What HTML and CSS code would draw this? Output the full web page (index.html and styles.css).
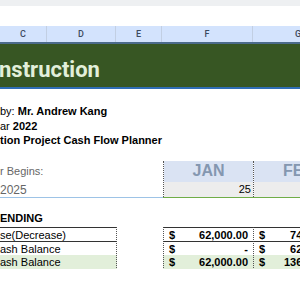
FILE: index.html
```html
<!DOCTYPE html>
<html>
<head>
<meta charset="utf-8">
<link rel="stylesheet" href="styles.css">
</head>
<body>
<div class="sheet">
  <div class="toolbar"></div>
  <div class="gap"></div>
  <div class="colhdr">
    <div class="ch">C</div>
    <div class="ch">D</div>
    <div class="ch">E</div>
    <div class="ch">F</div>
    <div class="ch">G</div>
  </div>
  <div class="banner"><span class="title">nstruction</span></div>
  <div class="info">
    <div class="line">by: <b>Mr. Andrew Kang</b></div>
    <div class="line">ar <b>2022</b></div>
    <div class="line"><b>tion Project Cash Flow Planner</b></div>
  </div>
  <div class="months">
    <div class="mleft">
      <div class="begins">r Begins:</div>
      <div class="year">2025</div>
    </div>
    <div class="mcol">
      <div class="mname">JAN</div>
      <div class="mval">25</div>
    </div>
    <div class="mcol">
      <div class="mname">FEB</div>
      <div class="mval"></div>
    </div>
  </div>
  <div class="ending">ENDING</div>
  <div class="table">
    <div class="row">
      <div class="lbl">se(Decrease)</div>
      <div class="gapc"></div>
      <div class="amt"><span>$</span><span>62,000.00</span></div>
      <div class="amt"><span>$</span><span>74,000.00</span></div>
    </div>
    <div class="row">
      <div class="lbl">ash Balance</div>
      <div class="gapc"></div>
      <div class="amt"><span>$</span><span>-</span></div>
      <div class="amt"><span>$</span><span>62,000.00</span></div>
    </div>
    <div class="row total">
      <div class="lbl">ash Balance</div>
      <div class="gapc"></div>
      <div class="amt"><span>$</span><span>62,000.00</span></div>
      <div class="amt"><span>$</span><span>136,000.00</span></div>
    </div>
  </div>
</div>
</body>
</html>
```
FILE: styles.css
```css
html, body {
  margin: 0;
  padding: 0;
  background: #ffffff;
}
body {
  font-family: "Liberation Sans", Arial, sans-serif;
  color: #000;
  width: 300px;
  height: 300px;
  overflow: hidden;
}
.sheet {
  width: 300px;
  overflow: hidden;
}
.toolbar {
  height: 6px;
  background: #eef0f2;
}
.gap {
  height: 20px;
}
.colhdr {
  display: grid;
  grid-template-columns: 47px 69px 46px 91px 91px;
  height: 16px;
  background: #d3e3fd;
  border-bottom: 2px solid #4b6b8b;
}
.ch {
  border-right: 1px solid #c2cfe3;
  display: flex;
  align-items: center;
  justify-content: center;
  font-family: Roboto, "Liberation Sans", sans-serif;
  font-size: 9px;
  font-weight: 500;
  color: #3c4a5e;
}
.banner {
  height: 43px;
  background: #375623;
  border-bottom: 2px solid #2f6db5;
  display: flex;
  align-items: flex-end;
  overflow: hidden;
}
.title {
  font-family: Roboto, "Liberation Sans", sans-serif;
  font-size: 22px;
  font-weight: bold;
  color: #e2efda;
  margin-left: -1px;
  padding-bottom: 6px;
  line-height: 1;
}
.info {
  padding-top: 15px;
  font-size: 11px;
  line-height: 14.5px;
}
.info .line {
  white-space: nowrap;
}
.months {
  margin-top: 13px;
  display: grid;
  grid-template-columns: 163px 90px 91px;
  height: 36px;
  border-bottom: 1px solid #70ad47;
}
.mleft {
  border-bottom: 1px solid #9dc3e6;
  margin-bottom: -1px;
  color: #666;
  font-size: 11px;
  padding-top: 0;
}
.begins {
  height: 20px;
  line-height: 20px;
}
.year {
  font-size: 12px;
  padding-top: 2px;
}
.mcol {
  border-left: 1px dotted #555;
  display: flex;
  flex-direction: column;
}
.mname {
  height: 21px;
  background: #dae3f3;
  color: #8497b0;
  font-weight: bold;
  font-size: 16px;
  display: flex;
  align-items: center;
  justify-content: center;
}
.mval {
  flex: 1;
  background: #ededed;
  font-size: 11px;
  text-align: right;
  padding-right: 2px;
  line-height: 15px;
}
.ending {
  margin-top: 14px;
  font-weight: bold;
  font-size: 11px;
  height: 15px;
}
.table {
  font-size: 11px;
}
.row {
  display: grid;
  grid-template-columns: 117px 46px 90px 91px;
  height: 14px;
  line-height: 14px;
}
.row:first-child .lbl,
.row:first-child .amt {
  border-top: 1px solid #333;
}
.row:nth-child(2) .lbl,
.row:nth-child(2) .amt {
  border-top: 1px solid #333;
}
.lbl {
  border-right: 1px dotted #555;
  white-space: nowrap;
}
.amt {
  border-left: 1px dotted #555;
  display: flex;
  justify-content: space-between;
  font-weight: bold;
  padding: 0 5px 0 5px;
  white-space: nowrap;
}
.row.total .lbl,
.row.total .amt {
  background: #e2efda;
  border-bottom: 1px solid #a9d08e;
}
```
